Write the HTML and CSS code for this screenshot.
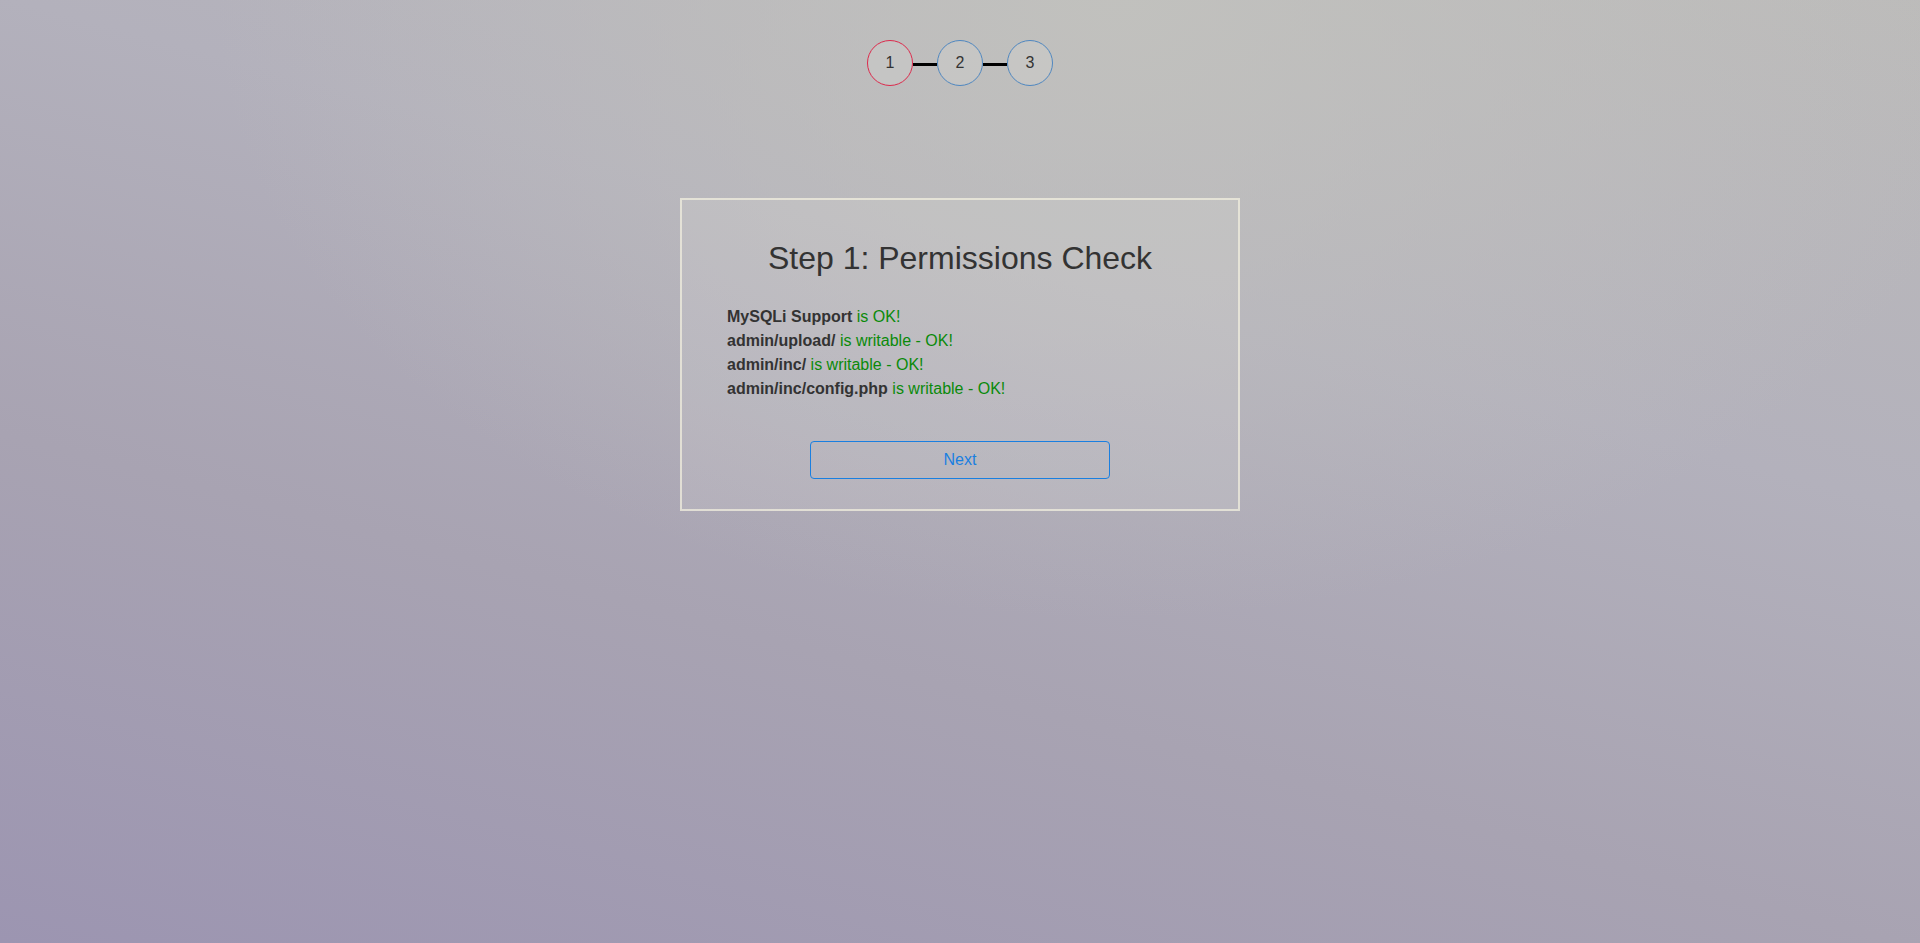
FILE: index.html
```html
<!DOCTYPE html>
<html lang="en">
<head>
<meta charset="utf-8">
<title>Installer - Step 1</title>
<link rel="stylesheet" href="styles.css">
</head>
<body>
<div class="page">
  <div class="steps">
    <div class="step step-active">1</div>
    <div class="step-line"></div>
    <div class="step">2</div>
    <div class="step-line"></div>
    <div class="step">3</div>
  </div>
  <div class="card">
    <h1 class="card-title">Step 1: Permissions Check</h1>
    <ul class="checks">
      <li><b>MySQLi Support</b> <span class="ok">is OK!</span></li>
      <li><b>admin/upload/</b> <span class="ok">is writable - OK!</span></li>
      <li><b>admin/inc/</b> <span class="ok">is writable - OK!</span></li>
      <li><b>admin/inc/config.php</b> <span class="ok">is writable - OK!</span></li>
    </ul>
    <div class="actions">
      <button class="btn-next" type="button">Next</button>
    </div>
  </div>
</div>
</body>
</html>
```
FILE: styles.css
```css
html, body {
  margin: 0;
  padding: 0;
  height: 100%;
}
body {
  font-family: "Liberation Sans", Arial, sans-serif;
  color: #333;
  background:
    radial-gradient(ellipse 900px 620px at 58% 0%, rgba(194, 194, 190, 0.9), rgba(194, 194, 190, 0) 100%),
    linear-gradient(195deg, #bcbbba 0%, #b3b1bc 35%, #a8a3b2 65%, #9c95b1 100%);
  min-height: 943px;
}
.page {
  display: flex;
  flex-direction: column;
  align-items: center;
  padding-top: 40px;
}
.steps {
  display: flex;
  align-items: center;
}
.step {
  box-sizing: border-box;
  width: 46px;
  height: 46px;
  border-radius: 50%;
  border: 1px solid #4f87c0;
  background: rgba(255, 255, 250, 0.12);
  display: flex;
  align-items: center;
  justify-content: center;
  font-size: 16px;
  color: #333;
}
.step-active {
  border-color: #dc2a4c;
}
.step-line {
  width: 24px;
  height: 3px;
  margin-top: 3px;
  background: #000;
}
.card {
  box-sizing: border-box;
  width: 560px;
  margin-top: 112px;
  border: 2px solid rgba(240, 238, 222, 0.75);
  background: rgba(255, 255, 245, 0.1);
  padding: 40px 45px 30px;
}
.card-title {
  margin: 0 0 28px;
  font-size: 32px;
  line-height: 37px;
  font-weight: normal;
  text-align: center;
  color: #333;
}
.checks {
  list-style: none;
  margin: 0;
  padding: 0;
  font-size: 16px;
  line-height: 24px;
}
.checks b {
  color: #333;
}
.ok {
  color: #0a8a0a;
}
.actions {
  display: flex;
  justify-content: center;
  margin-top: 40px;
}
.btn-next {
  width: 300px;
  height: 38px;
  border: 1px solid #1a7fe0;
  border-radius: 4px;
  background: transparent;
  color: #1a7fe0;
  font-family: "Liberation Sans", Arial, sans-serif;
  font-size: 16px;
  cursor: pointer;
}
```
